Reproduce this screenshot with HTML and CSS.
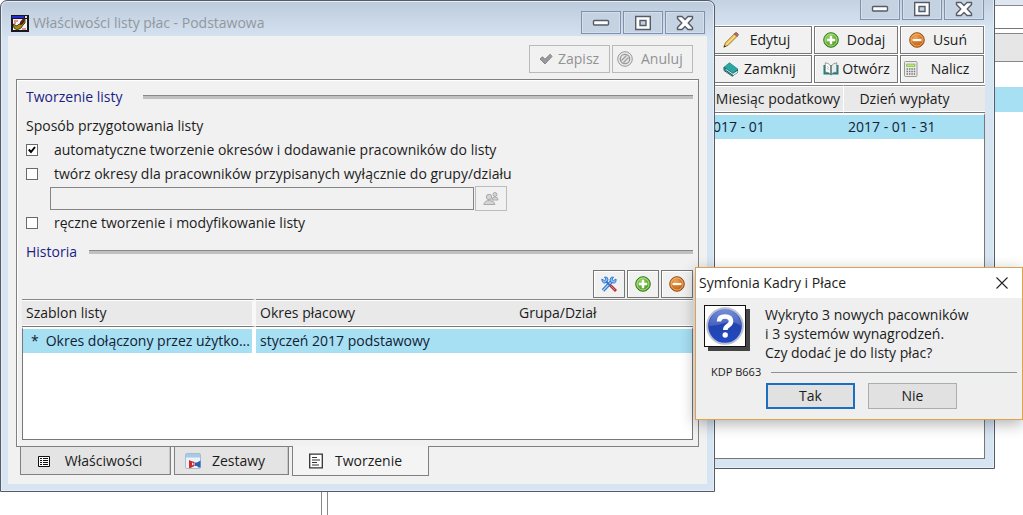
FILE: index.html
```html
<!DOCTYPE html>
<html lang="pl">
<head>
<meta charset="utf-8">
<title>Symfonia Kadry i Płace</title>
<link rel="stylesheet" href="styles.css">
</head>
<body>
<svg class="defs" aria-hidden="true">
  <defs>
    <radialGradient id="green" cx=".4" cy=".3" r=".8"><stop offset="0" stop-color="#8fd45a"/><stop offset="1" stop-color="#3d8f14"/></radialGradient>
    <radialGradient id="orange" cx=".4" cy=".3" r=".8"><stop offset="0" stop-color="#f2a050"/><stop offset="1" stop-color="#b65404"/></radialGradient>
    <linearGradient id="blue" x1="0" y1="0" x2="0" y2="1"><stop offset="0" stop-color="#6a86d8"/><stop offset=".45" stop-color="#2444ae"/><stop offset="1" stop-color="#1f49c4"/></linearGradient>
    <symbol id="add" viewBox="0 0 16 16"><circle cx="8" cy="8" r="7.3" fill="url(#green)" stroke="#3a7d1a"/><circle cx="8" cy="8" r="6" fill="none" stroke="#c5e8a8" stroke-width=".8"/><path d="M8 3.8v8.4M3.8 8h8.4" stroke="#fff" stroke-width="2.4"/></symbol>
    <symbol id="remove" viewBox="0 0 16 16"><circle cx="8" cy="8" r="7.3" fill="url(#orange)" stroke="#9a5518"/><circle cx="8" cy="8" r="6" fill="none" stroke="#f6c48e" stroke-width=".7"/><path d="M3.6 8h8.8" stroke="#fff" stroke-width="2.2"/></symbol>
    <symbol id="min" viewBox="0 0 18 16"><rect x="1.5" y="5.5" width="15" height="4.500" rx="1" fill="#fff" stroke="#555b69" stroke-width="1.4"/></symbol>
    <symbol id="max" viewBox="0 0 18 16"><path fill-rule="evenodd" d="M1.700 1.500h14.600v13H1.700zM6 5.500v5h6v-5z" fill="#fff" stroke="#555b69" stroke-width="1.400"/></symbol>
    <symbol id="close" viewBox="0 0 18 16"><path d="M1.500 1.500H6l3 3 3-3h4.500v2L12.200 8l4.300 4.500v2H12l-3-3-3 3H1.500v-2L5.800 8 1.500 3.500z" fill="#fff" stroke="#555b69" stroke-width="1.400" stroke-linejoin="round"/></symbol>
  </defs>
</svg>
<main class="desktop">
  <div class="strip">
    <div class="strip-field"></div>
    <div class="strip-head"></div>
    <div class="strip-row"></div>
  </div>
  <div class="splitter"></div>

  <section class="window window-back" aria-label="Listy płac">
    <header class="titlebar titlebar-back">
      <div class="controls">
        <button aria-label="Minimalizuj"><svg><use href="#min"/></svg></button>
        <button aria-label="Maksymalizuj"><svg><use href="#max"/></svg></button>
        <button aria-label="Zamknij okno"><svg><use href="#close"/></svg></button>
      </div>
    </header>
    <div class="client client-back">
      <div class="tools">
        <button class="tool"><svg class="ico" viewBox="0 0 16 16"><path d="M.8 15.200l1.600-4.400L11.500 1.700l2.600 2.600L5 13.400z" fill="#f3c65c" stroke="#8c6a25" stroke-width=".8"/><path d="M3.500 12.500l9.200-9.300" stroke="#fde9a0"/><path d="M11.300 1.900l1.300-1.300q.6-.4 1.200.2l1.300 1.300q.5.600 0 1.100l-1.200 1.300z" fill="#b96f60" stroke="#75433c" stroke-width=".7"/><path d="M.8 15.200l.8-2.200 1.400 1.400z" fill="#222"/></svg><span>Edytuj</span></button>
        <button class="tool"><svg class="ico"><use href="#add"/></svg><span>Dodaj</span></button>
        <button class="tool"><svg class="ico"><use href="#remove"/></svg><span>Usuń</span></button>
        <button class="tool"><svg class="ico" viewBox="0 0 16 16"><path d="M1 6l5.500-4.500L15 8v3.500L10 15 1.500 9z" fill="#17646b"/><path d="M1 6l5.500-4.500L15 8l-5 4z" fill="#2ba6a4"/><path d="M2.500 8.500l7.500 5 4.500-3" fill="none" stroke="#f1f1ee" stroke-width="1.500"/><path d="M1 6v3.500l8.500 5.800.5-1-7.800-5.400" fill="none" stroke="#155d66"/></svg><span>Zamknij</span></button>
        <button class="tool"><svg class="ico" viewBox="0 0 16 16"><path d="M.5 4v9.500H7l1 1 1-1h6.500V4z" fill="#237f7c"/><path d="M2.300 1.800q3.200.2 5.200 3V13Q5.500 10.800 2.300 11.200z" fill="#fff" stroke="#777" stroke-width=".7"/><path d="M13.700 1.800q-3.200.2-5.200 3V13q2-2.200 5.200-1.800z" fill="#e6eeee" stroke="#777" stroke-width=".7"/><path d="M4 5.500q1.500.5 2.300 1.500M4 7.500Q5.500 8 6.300 9" stroke="#999" stroke-width=".7" fill="none"/></svg><span>Otwórz</span></button>
        <button class="tool tool-edge"><svg class="ico" viewBox="0 0 16 16"><rect x="1.500" y=".5" width="12.500" height="15" rx="1" fill="#ecece8" stroke="#999"/><path d="M3.500 3h8.500v2.500H3.500z" fill="#b5e870" stroke="#6c9d38" stroke-width=".5"/><path d="M3.500 8h9M3.500 10.500h9M3.500 13h9" stroke="#777" stroke-width="1.300" stroke-dasharray="1.500 .9"/></svg><span>Nalicz</span></button>
      </div>
      <div class="list list-back">
        <table>
          <colgroup><col><col class="col-month"><col class="col-day"></colgroup>
          <thead><tr><th></th><th class="center split">Miesiąc podatkowy</th><th class="center day">Dzień wypłaty</th></tr></thead>
          <tbody><tr><td></td><td>2017 - 01</td><td>2017 - 01 - 31</td></tr></tbody>
        </table>
      </div>
    </div>
  </section>

  <section class="window window-main" aria-label="Właściwości listy płac">
    <header class="titlebar">
      <svg class="app-ico" viewBox="0 0 18 18"><path d="M0 1h18v17H0z" fill="#17171f"/><path d="M2 5h14v11H2z" fill="#f2f2ee"/><path d="M1 2h12v2H1z" fill="#2b2bd8"/><path d="M14 2h2v2h-2z" fill="#ddd"/><path d="M3 7h4M3 9h2M11 15h4" stroke="#c33"/><path d="M2 10l4 2 2-2 3 0 0-4 3-1v4l-2 2-2 3-4 2-3-2z" fill="#a08a18" stroke="#2e2106" stroke-width=".8"/><path d="M9 8l3-3 2 1-2 4-3 1z" fill="#5d1e12"/></svg>
      <h1>Właściwości listy płac - Podstawowa</h1>
      <div class="controls">
        <button aria-label="Minimalizuj"><svg><use href="#min"/></svg></button>
        <button aria-label="Maksymalizuj"><svg><use href="#max"/></svg></button>
        <button aria-label="Zamknij okno"><svg><use href="#close"/></svg></button>
      </div>
    </header>
    <div class="client">
      <div class="actions">
        <button class="action" disabled><svg class="ico" viewBox="0 0 16 16"><path d="M2 8l2.500-2.300L7 8.200l5.200-5L14 5.500 7 13z" fill="#999" stroke="#888" stroke-linejoin="round"/></svg><span>Zapisz</span></button>
        <button class="action action-edge" disabled><svg class="ico" viewBox="0 0 16 16"><circle cx="8" cy="8" r="7.300" fill="#e8e8e8" stroke="#999"/><circle cx="8" cy="8" r="4.700" fill="none" stroke="#999" stroke-width="1.300"/><path d="M4.500 9.500l5-5M6.500 11.500l5-5" stroke="#999" stroke-width="1.200"/></svg><span>Anuluj</span></button>
      </div>
      <div class="panel">
        <h2 class="group"><span>Tworzenie listy</span></h2>
        <div class="form">
          <p>Sposób przygotowania listy</p>
          <label class="check"><input type="checkbox" checked><span>automatyczne tworzenie okresów i dodawanie pracowników do listy</span></label>
          <label class="check"><input type="checkbox"><span>twórz okresy dla pracowników przypisanych wyłącznie do grupy/działu</span></label>
          <div class="picker">
            <input type="text" aria-label="Grupa lub dział" disabled>
            <button aria-label="Wybierz grupę" disabled><svg class="ico" viewBox="0 0 16 16"><g fill="#d5d5d5" stroke="#aaa"><circle cx="12" cy="3.500" r="2"/><path d="M9 9q0-3 3-3t3 3z"/><circle cx="6" cy="6" r="2.700"/><path d="M.8 13.500q.7-4 5.500-4T12 13.500z"/></g></svg></button>
          </div>
          <label class="check"><input type="checkbox"><span>ręczne tworzenie i modyfikowanie listy</span></label>
        </div>
        <h2 class="group group-history"><span>Historia</span></h2>
        <div class="history-tools">
          <button aria-label="Narzędzia"><svg class="ico" viewBox="0 0 16 16"><path d="M2 14.500L12 4" stroke="#2c6fc9" stroke-width="3.400"/><path d="M2 14.500L12 4" stroke="#a9d3fb" stroke-width="1.500"/><path d="M15 3l-2.500 1.500L11 3.500 12.500 1Q9.500.5 9 3.500t3 3.500 3-4z" fill="#8dc2f7" stroke="#2c6fc9" stroke-width=".9"/><path d="M.8 3l2.500 1.500L5 3.500 3.500 1Q7 .5 7 3.500T4 7 .8 3z" fill="#8dc2f7" stroke="#2c6fc9" stroke-width=".9"/><path d="M5 5.500l5 5" stroke="#3777c6" stroke-width="1.800"/><path d="M9.500 9.500l5.500 5.500" stroke="#b82f35" stroke-width="2.800"/><path d="M10 10l4 4" stroke="#ef8c88" stroke-width=".8"/></svg></button>
          <button aria-label="Dodaj okres"><svg class="ico"><use href="#add"/></svg></button>
          <button aria-label="Usuń okres"><svg class="ico"><use href="#remove"/></svg></button>
        </div>
        <div class="list">
          <table>
            <colgroup><col class="col-template"><col class="col-period"><col></colgroup>
            <thead><tr><th class="gap">Szablon listy</th><th>Okres płacowy</th><th>Grupa/Dział</th></tr></thead>
            <tbody><tr><td class="gap"><span class="star">*</span>Okres dołączony przez użytko...</td><td>styczeń 2017 podstawowy</td><td></td></tr></tbody>
          </table>
        </div>
      </div>
      <nav class="tabs">
        <button class="tab tab-wide"><svg class="tab-ico" viewBox="0 0 16 16"><path d="M2.500 3.500h11v10h-11z" fill="#fff" stroke="#111"/><path d="M4 5.500h2M4 7.500h2M4 9.500h2M4 11.500h2M7 5.500h5M7 7.500h5M7 9.500h5M7 11.500h5" stroke="#111"/></svg><span>Właściwości</span></button>
        <button class="tab"><svg class="tab-ico" viewBox="0 0 16 16"><rect x=".5" y=".5" width="15" height="15" rx="1.500" fill="#edf2f6" stroke="#a7bccd"/><path d="M1 1h14v3.500H1z" fill="#a5cbe8"/><path d="M4 7v8h1.500l4-2V9L6 8z" fill="#cf2a2a"/><path d="M15.500 7.500v7h-2L12 13h-2V9.500h2z" fill="#2c62b4"/><path d="M7 9.500l2 1.500-2 1.500z" fill="#fff"/></svg><span>Zestawy</span></button>
        <button class="tab tab-active"><svg class="tab-ico" viewBox="0 0 16 16"><path d="M1.700 1.200h12.600v13.600H1.700z" fill="#fff" stroke="#333" stroke-width="1.300"/><path d="M4 4.500h5M4 7h8M4 9.500h5M4 12h7" stroke="#333" stroke-width="1.200"/></svg><span>Tworzenie</span></button>
      </nav>
    </div>
  </section>

  <section class="dialog" role="dialog" aria-labelledby="dialog-title">
    <header class="dialog-title">
      <h2 id="dialog-title">Symfonia Kadry i Płace</h2>
      <button aria-label="Zamknij"><svg viewBox="0 0 12 12"><path d="M.5.500l11 11M11.500.500l-11 11" stroke="#222" stroke-width="1.100"/></svg></button>
    </header>
    <div class="dialog-body">
      <div class="message">
        <div class="question"><svg viewBox="0 0 40 40"><circle cx="20" cy="20" r="17.800" fill="url(#blue)" stroke="#b9bed0" stroke-width="2"/><path d="M4 20a16 16 0 0 1 32 0q-8-6-16-3T4 20z" fill="#9db0ea" opacity=".3"/><path d="M14 15.500q0-5 6-5t6 4.800q0 2.700-3 4.400-2.700 1.500-2.700 4.300" fill="none" stroke="#fff" stroke-width="4.600"/><circle cx="20.200" cy="29" r="2.700" fill="#fff"/></svg></div>
        <p>Wykryto 3 nowych pacowników<br>i 3 systemów wynagrodzeń.<br>Czy dodać je do listy płac?</p>
      </div>
      <div class="code"><span>KDP B663</span></div>
      <div class="answers">
        <button class="answer answer-default">Tak</button>
        <button class="answer">Nie</button>
      </div>
    </div>
  </section>
</main>
</body>
</html>
```
FILE: styles.css
```css
* { box-sizing: border-box; }
body {
  margin: 0;
  font: 14px/20px "Open Sans", "Noto Sans", sans-serif;
  color: #1c1c1c;
}
h1, h2, p { margin: 0; font-size: inherit; font-weight: 400; }
button, input { font: inherit; color: inherit; margin: 0; padding: 0; }
svg { display: block; flex: none; }
.defs { position: absolute; width: 0; height: 0; }
.ico { width: 16px; height: 16px; }
.desktop { position: relative; height: 100vh; overflow: hidden; background: #fff; }

.strip { display: flex; flex-direction: column; margin-left: 70%; }
.strip-field { height: 29px; border-top: 5px solid #dfe8f2; border-bottom: 1px solid #777; box-shadow: inset 0 1px #888; }
.strip-head { height: 29px; margin-top: 4px; background: #e6e6e6; border: 1px solid #888; border-width: 1px 0; }
.strip-row { height: 25px; margin-top: 25px; background: #a7dff3; }
.splitter { position: absolute; left: 321px; bottom: 0; width: 7px; height: 30px; border: 1px solid #888; border-width: 0 1px; }

.window {
  position: absolute;
  display: flex;
  flex-direction: column;
  padding: 0 7px 7px;
  border: 1px solid #565b66;
  border-radius: 7px 7px 0 0;
  background: linear-gradient(#bccbdc, #d7e4f2 40px);
  box-shadow: inset 0 0 0 1px #e6eef7;
}
.window-main { left: 0; right: 308px; top: 0; bottom: 23px; }
.window-back { left: 65%; right: 28px; top: -12px; bottom: 46px; padding: 0 9px 9px; }
.titlebar { display: flex; align-items: center; height: 35px; padding: 8px 2px 0 3px; gap: 4px; }
.titlebar h1 { flex: 1; color: #92979f; }
.titlebar-back { height: 36px; padding: 3px 1px 0 0; justify-content: flex-end; }
.app-ico { width: 18px; height: 18px; }
.controls { display: flex; gap: 2px; }
.controls button {
  display: flex; align-items: center; justify-content: center;
  width: 40px; height: 23px;
  border: 1px solid #8191a9;
  background: #c5d2e2;
  box-shadow: inset 0 0 0 1px #d5dfeb;
}
.controls svg { width: 18px; height: 16px; }
.client { flex: 1; min-height: 0; display: flex; flex-direction: column; padding: 9px 8px 8px; background: #f1f1f1; }
.client-back { padding: 1px 0 0; background: #fff; }

.actions { display: flex; justify-content: flex-end; gap: 2px; padding-right: 6px; margin-bottom: 6px; }
.action { display: flex; align-items: center; gap: 4px; width: 81px; height: 28px; padding-left: 8px; border: 1px solid #b9b9b9; background: #f1f1f1; color: #929292; }
.action-edge { padding: 0 12px 0 4px; gap: 8px; }

.panel { flex: 1; min-height: 0; display: flex; flex-direction: column; padding: 6px 5px; border: 1px solid #808080; box-shadow: inset 1px 1px #fff; }
.group { display: flex; align-items: center; gap: 20px; padding-left: 4px; height: 22px; color: #1c1c86; }
.group::after { content: ""; flex: 1; height: 3px; border-top: 1px solid #888; background: #c0c0c0; }
.group-history { gap: 12px; }
.form { display: flex; flex-direction: column; padding: 8px 4px 6px; }
.form p { height: 22px; }
.check { display: flex; align-items: center; height: 24px; gap: 16px; }
.check input { appearance: none; width: 12px; height: 12px; border: 1px solid #6a6a6a; background: #fff; }
.check input:checked { background: #fff url("data:image/svg+xml,%3Csvg xmlns='http://www.w3.org/2000/svg' viewBox='0 0 10 10'%3E%3Cpath d='M1.800 4.500L4 7l4-5' fill='none' stroke='%23000' stroke-width='2'/%3E%3C/svg%3E"); }
.picker { display: flex; align-items: center; gap: 1px; height: 25px; padding-left: 24px; }
.picker input { flex: 0 1 424px; height: 23px; border: 1px solid #858585; background: #f1f1f1; }
.picker button { display: flex; align-items: center; justify-content: center; width: 32px; height: 25px; border: 1px solid #bcbcbc; background: #f1f1f1; }
.history-tools { display: flex; justify-content: flex-end; gap: 2px; padding: 7px 0 1px; }
.history-tools button { display: flex; align-items: center; justify-content: center; width: 32px; height: 28px; border: 1px solid #777; background: #f1f1f1; box-shadow: inset 1px 1px #fff; }

.list { flex: 1; min-height: 0; border: 1px solid #777; border-top: 0; background: #fff; }
.list table { width: calc(100% + 2px); margin: 0 -1px; table-layout: fixed; border-collapse: separate; border-spacing: 0; white-space: nowrap; }
.col-template { width: 234px; }
.col-period { width: 259px; }
.list th { height: 28px; padding: 0 4px; text-align: left; font-weight: 400; background: #e9e9e9; border-top: 1px solid #888; border-bottom: 1px solid #777; box-shadow: inset 0 -1px #fff, inset 0 1px #fff; }
.list th.gap { border-right: 4px solid #f8f8f8; }
.list td { height: 26px; padding: 0 4px; background: #a7dff3; border-top: 2px solid #fff; color: #123; overflow: hidden; }
.list td:first-child { border-left: 1px solid #777; }
.list td:last-child { border-right: 1px solid #777; }
.list td.gap { border-right: 4px solid #fff; padding-left: 8px; }
.star { margin-right: 7px; }
.list-back { margin-top: 2px; }
.list.list-back th.center { text-align: center; padding: 0; }
.list.list-back th.split { border-right: 1px solid #fff; padding-left: 12px; }
.list.list-back th.day { padding-right: 20px; }
.col-month { width: 143px; }
.col-day { width: 141px; }

.tools { display: grid; grid-template-columns: 100px 84px 84px; justify-content: end; gap: 1px 2px; padding-right: 1px; }
.tool { display: flex; align-items: center; height: 28px; padding: 0 8px; border: 1px solid #777; background: #f1f1f1; box-shadow: inset 1px 1px #fff; }
.tool:nth-child(3n+1) { padding: 0 10px; }
.tool:nth-child(3n+2) { padding-right: 4px; }
.tool.tool-edge { padding: 0 2px; }
.tool span, .action-edge span { flex: 1; text-align: center; }

.tabs { display: flex; gap: 3px; padding-left: 4px; height: 29px; }
.tab { display: flex; align-items: center; width: 115px; height: 28px; padding: 0 12px 0 10px; border: 1px solid #808080; border-top: 0; background: #e4e4e4; box-shadow: inset -1px 0 #c8c8c8; }
.tab span { flex: 1; text-align: center; }
.tab-wide { width: 151px; padding: 0 15px; }
.tab-active { position: relative; width: 137px; height: 30px; margin-top: -1px; padding: 0 15px; background: #f4f4f4; box-shadow: none; }
.tab-ico { width: 16px; height: 16px; }

.dialog { position: absolute; right: 0; top: 267px; width: 328px; border: 1px solid #d9a44c; background: #efefef; box-shadow: 0 4px 14px rgba(0, 0, 0, .3); }
.dialog-title { display: flex; align-items: center; justify-content: space-between; height: 30px; padding: 0 14px 0 3px; background: #fff; }
.dialog-title button { border: 0; background: none; }
.dialog-title svg { width: 12px; height: 12px; }
.dialog-body { padding: 7px 5px 10px 8px; }
.message { display: flex; gap: 19px; }
.message p { line-height: 19px; white-space: nowrap; }
.question { width: 42px; height: 42px; border: 1px solid #111; background: #fff; box-shadow: 4px 4px #444; }
.question svg { width: 40px; height: 40px; }
.code { display: flex; align-items: center; gap: 10px; height: 20px; padding-left: 7px; font-size: 11px; }
.code::after { content: ""; flex: 1; height: 1px; background: #8b9494; }
.answers { display: flex; gap: 13px; padding: 1px 0 0 62px; }
.answer { width: 89px; height: 26px; border: 1px solid #adadad; background: #e1e1e1; line-height: 20px; }
.answer-default { border: 2px solid #1a6fc4; }
```
